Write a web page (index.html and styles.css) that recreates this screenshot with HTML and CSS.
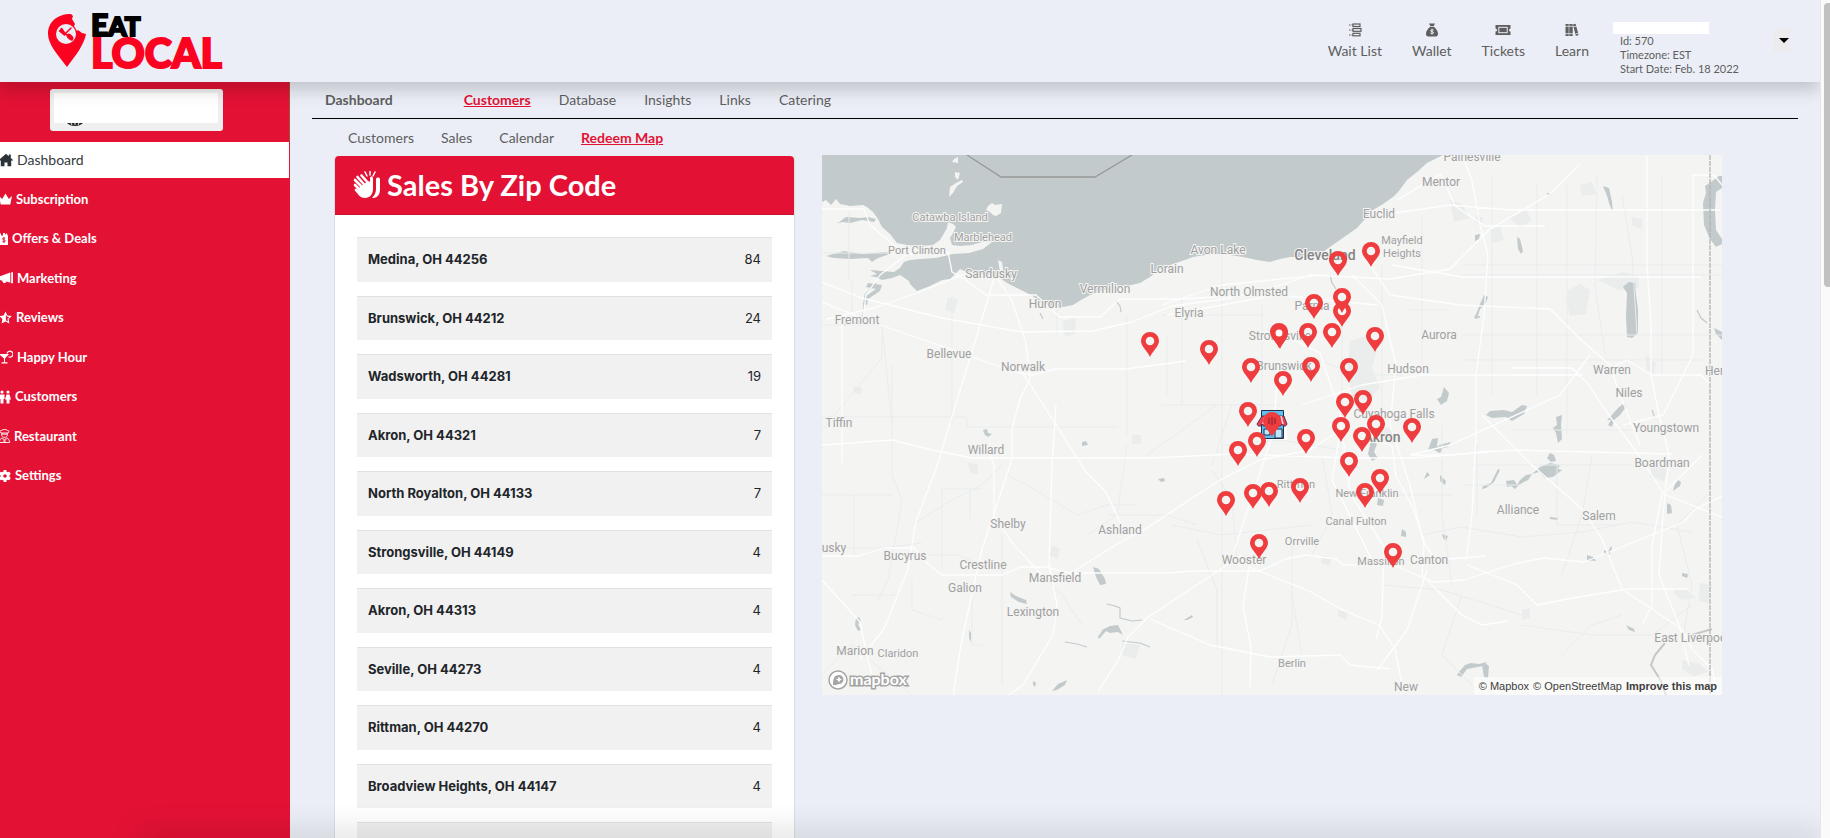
FILE: index.html
```html
<!DOCTYPE html>
<html lang="en">
<head>
    <meta charset="UTF-8">
    <meta name="viewport" content="width=device-width, initial-scale=1.0">
    <title>Eat Local - Redeem Map</title>
    <link rel="stylesheet" href="styles.css">
</head>
<body>
    <div class="app">
        <header class="topbar">
            <a href="#" class="logo" aria-label="Eat Local">
                <svg width="180" height="60" viewBox="0 0 180 60">
                    <path fill="#fb0221" d="M23 1C9 1 0 9 0 21c0 10 9 20 19 33 9-12 17-22 19-33l-4-1-4-3-1 1-3-5 1-2-3-5 1-3z"/>
                    <circle cx="18" cy="21" r="10" fill="#ebeef6"/>
                    <path stroke="#fb0221" stroke-width="1.500" stroke-linecap="round" d="M13 16l11 11M23 15l-6 6"/>
                    <ellipse cx="22" cy="24" rx="2.500" ry="4" fill="#fb0221" transform="rotate(-45 22 24)"/>
                    <path fill="#fb0221" d="M10.500 18l3.500-3.500 4 7-1.500 1.500z"/>
                    <text x="43" y="23" class="logo-eat"><tspan class="logo-e">E</tspan>AT</text>
                    <text x="43" y="55" class="logo-local">LOCAL</text>
                </svg>
            </a>
            <nav class="quick-links">
                <a href="#">
                    <svg width="14" height="14" viewBox="0 0 14 14" fill="none" stroke="#5e5e5e" stroke-width="1.200"><path d="M1 2h1.500M1 7h1.500M1 12h1.500M3.500 2H5M3.500 7H5M3.500 12H5"/><rect x="5" y="1" width="7" height="2.500"/><rect x="5" y="5.500" width="8" height="2.800"/><rect x="5" y="10.300" width="7" height="2.500"/></svg>
                    Wait List
                </a>
                <a href="#">
                    <svg width="14" height="14" viewBox="0 0 14 14" fill="#5e5e5e"><path d="M4 .5h6L8.700 3H5.300zM5.200 3.800h3.600c2.300 1.700 4.200 4.300 4.200 7 0 1.700-.8 2.700-2.300 2.700H3.300C1.800 13.500 1 12.500 1 10.800c0-2.700 1.900-5.300 4.200-7z"/><path d="M8.600 7.200c-.6-.6-3-.7-3 .5 0 1.300 3 .7 3 2 0 1.200-2.500 1.100-3.200.4M7 5.800v5.700" fill="none" stroke="#ebeef6"/></svg>
                    Wallet
                </a>
                <a href="#">
                    <svg width="16" height="14" viewBox="0 0 16 14"><path fill="#5e5e5e" d="M.5 2h15v3.500a1.500 1.500 0 0 0 0 3V12H.5V8.500a1.500 1.500 0 0 0 0-3z"/><rect x="3.800" y="4.300" width="8.400" height="5.400" fill="none" stroke="#ebeef6"/></svg>
                    Tickets
                </a>
                <a href="#">
                    <svg width="14" height="14" viewBox="0 0 14 14" fill="#5e5e5e"><path d="M.5 1h3.200v12H.5zM4.300 1h3.400v12H4.300zM8 1.600l2.600-.8 3 11.200-2.700.9-2.600-9.600z"/><path stroke="#ebeef6" stroke-width=".8" d="M0 3.300h8M0 10.700h8M8 4l4-1M10.500 11l4-1"/></svg>
                    Learn
                </a>
            </nav>
            <div class="account">
                <span class="account-name"></span>
                <span>Id: 570</span>
                <span>Timezone: EST</span>
                <span>Start Date: Feb. 18 2022</span>
            </div>
            <button class="account-toggle" aria-label="Account menu"></button>
        </header>

        <div class="layout">
            <aside class="sidebar">
                <div class="business">
                    <button class="business-button" aria-label="Business">
                        <span class="business-name"></span>
                        <svg width="16" height="3" viewBox="0 0 16 3"><path d="M0 0h16c-2 2-4.500 3-8 3S2 2 0 0z" fill="#222"/><path d="M4 0l1 2M8 0v2M12 0l-1 2" stroke="#efefef"/></svg>
                    </button>
                </div>
                <nav class="side-nav">
                    <a href="#" class="active">
                        <svg width="14" height="14" viewBox="0 0 14 14"><path d="M7 .8l2.800 2.500V1.500h2v3.600L14 7l-.9 1-.9-.7v6H8.500V9.500h-3v3.800H1.800v-6L.9 8 0 7z"/></svg>
                        Dashboard
                    </a>
                    <a href="#">
                        <svg width="13" height="14" viewBox="0 0 13 14"><path d="M0 4l3.200 3L6.500 1.500 9.800 7 13 4l-1.700 8.500H1.700z"/></svg>
                        Subscription
                    </a>
                    <a href="#">
                        <svg width="9" height="14" viewBox="0 0 9 14"><path d="M0 1.500h2v2h2V1h2v2l1.500-2L9 4v9H0z"/><path d="M6.200 6.500c-.6-.7-2.700-.6-2.700.4 0 1.300 2.900.7 2.900 2 0 1.100-2.300 1.200-3 .4M4.900 5v6" fill="none" stroke="#e31235" stroke-width=".9"/></svg>
                        Offers &amp; Deals
                    </a>
                    <a href="#">
                        <svg width="14" height="14" viewBox="0 0 14 14"><path d="M0 5.500L11.300 1.500v10.300l-4-1.200c0 2-3.800 2.200-4-.8L0 8.800zM12.200 1.200H14v11h-1.800z"/></svg>
                        Marketing
                    </a>
                    <a href="#">
                        <svg width="13" height="14" viewBox="0 0 13 14"><path fill-rule="evenodd" d="M6.500.5l1.900 4 4.400.5-3.200 3.100.8 4.500-3.900-2.200-3.900 2.200.8-4.500L.2 5l4.400-.5zM6.900 3.500v5.800l2 1.100-.4-2.600 1.800-1.900-2.500-.3z"/></svg>
                        Reviews
                    </a>
                    <a href="#">
                        <svg width="14" height="14" viewBox="0 0 14 14"><path d="M0 4h10L6 8.500v3.700h2.500v1.300h-6v-1.300H5V8.500z"/><path d="M8 3.500a3 3 0 1 1 1.500 3.300" fill="none" stroke="#fff" stroke-width="1.200"/></svg>
                        Happy Hour
                    </a>
                    <a href="#">
                        <svg width="12" height="14" viewBox="0 0 12 14"><circle cx="3" cy="2" r="1.600"/><circle cx="9" cy="2" r="1.600"/><path d="M.5 4.500h5v4.500h-1v4.500h-3V9h-1zM7.500 4.500h3l1.500 5h-1.500v4h-3v-4H6z"/></svg>
                        Customers
                    </a>
                    <a href="#">
                        <svg width="11" height="14" viewBox="0 0 11 14" fill="none" stroke="#fff" stroke-width=".9"><path d="M2 4c-1.500-1-1-3 .7-2.600C3.500.2 7.500.2 8.300 1.400 10 1 10.500 3 9 4zM2.700 4v2.500c.6 2.500 5 2.500 5.600 0V4M3 5.200h5M.5 13.500c0-3 1-4 3-4.500l2 2 2-2c2 .5 3 1.500 3 4.500zM4 10.500l3 3M7 10.500l-3 3"/></svg>
                        Restaurant
                    </a>
                    <a href="#">
                        <svg width="12" height="14" viewBox="0 0 12 14"><path fill-rule="evenodd" d="M4.700 1h2.600l.4 1.700 1 .6 1.700-.5L11.700 5l-1.200 1.300v1.400L11.700 9l-1.300 2.200-1.700-.5-1 .6-.4 1.700H4.700l-.4-1.700-1-.6-1.700.5L.3 9l1.200-1.300V6.300L.3 5l1.300-2.200 1.700.5 1-.6zM6 5.200a1.800 1.800 0 1 0 0 3.600 1.800 1.800 0 0 0 0-3.600z"/></svg>
                        Settings
                    </a>
                </nav>
            </aside>

            <main class="content">
                <nav class="tabs">
                    <span class="tabs-title">Dashboard</span>
                    <a href="#" class="active">Customers</a>
                    <a href="#">Database</a>
                    <a href="#">Insights</a>
                    <a href="#">Links</a>
                    <a href="#">Catering</a>
                </nav>
                <nav class="subtabs">
                    <a href="#">Customers</a>
                    <a href="#">Sales</a>
                    <a href="#">Calendar</a>
                    <a href="#" class="active">Redeem Map</a>
                </nav>

                <div class="columns">
                    <section class="card">
                        <h1 class="card-header">
                            <svg width="28" height="28" viewBox="0 0 28 28" fill="#fff"><path d="M2 9l8 8M2 14l6 6M4.500 6l8 9M8.500 4.500l8 9M3 19l4 4" stroke="#fff" stroke-width="2.600" stroke-linecap="round"/><path d="M6 17l9-7c2 2 2.500 0 2-3 0-2 3-2 3 0v11c0 5-3 9-8 9-4 0-7-3-8-6z"/><path d="M23 8c0-2 4-2 4 0v10c0 5-2 8-6 9h-2c3-3 4-6 4-9z"/><path d="M12 1l2 4M17 0v4M22 1l-2 4" stroke="#fff" stroke-width="1.500" stroke-linecap="round"/></svg>
                            Sales By Zip Code
                        </h1>
                        <table class="zip-table">
                            <tbody>
                                <tr><th scope="row">Medina, OH 44256</th><td>84</td></tr>
                                <tr><th scope="row">Brunswick, OH 44212</th><td>24</td></tr>
                                <tr><th scope="row">Wadsworth, OH 44281</th><td>19</td></tr>
                                <tr><th scope="row">Akron, OH 44321</th><td>7</td></tr>
                                <tr><th scope="row">North Royalton, OH 44133</th><td>7</td></tr>
                                <tr><th scope="row">Strongsville, OH 44149</th><td>4</td></tr>
                                <tr><th scope="row">Akron, OH 44313</th><td>4</td></tr>
                                <tr><th scope="row">Seville, OH 44273</th><td>4</td></tr>
                                <tr><th scope="row">Rittman, OH 44270</th><td>4</td></tr>
                                <tr><th scope="row">Broadview Heights, OH 44147</th><td>4</td></tr>
                                <tr><th scope="row">&nbsp;</th><td></td></tr>
                            </tbody>
                        </table>
                    </section>

                    <section class="map">
                        <svg class="map-canvas" viewBox="0 0 900 540" role="img" aria-label="Redeem map">
                            <defs>
                                <path id="pin" fill="#ef3c3e" fill-rule="evenodd" d="M0 16C-3 9-9 6-9-.5a9 8.500 0 0 1 18 0C9 6 3 9 0 16zM0-4.300a4.300 4.300 0 1 0 0 8.600 4.300 4.300 0 0 0 0-8.600z"/>
                            </defs>
                            <rect width="900" height="540" fill="#f4f4f3"/>

                            <!-- parks and towns -->
                            <g fill="#ebecec">
                                <path d="M528 186l20-6 8 12-6 20 8 20-12 14-16-4-4-30zM746 135l12-6 10 6-4 24-16 2-3-12zM775 125l26-8 16 4v12l-20 2zM758 30l12-3 4 12-14 2zM688 63l16-8 6 10-12 8zM668 75l10-4 4 14-12 3zM810 62l10 2v10l-10-4zM628 45l12 4 8 14-16 4zM852 432l12 3 10 8-14 2-8-6zM878 428l12 2-4 18-10-2zM300 488l18 2-4 14-14-4zM126 142l10 2-4 14-9-3zM230 390l8 4-2 10-8-4zM146 308l10 1v10l-8-1zM310 280h9v9h-9zM32 231l8 2-1 6-8-2zM240 166l14-3-1 16-10 3zM556 270l14 4 4 14-14-2z"/>
                                <path d="M860 505l18 4 8 8-14 4-12-6zM824 200l10 8-2 12-8-6zM700 455l8-2v10l-8 2zM516 455l10 2-2 8-8-4zM830 310l16 4-4 12-14-4zM655 60l6 3-2 7-6-3zM500 400l10 3-3 8-8-3z"/>
                            </g>

                            <!-- lake erie -->
                            <path fill="#c2cacb" d="M0 0H621L605 8 595 17 585 25 577 36 571 42 561 49 551 55 543 64 535 73 525 80 515 87 505 94 495 102H468L458 104 448 107 435 105 421 102 408 100 395 99 383 100 371 102 360 106 348 110 338 114 328 122 318 128 305 131 291 133 279 136 268 140 259 145 251 150 241 152 230 151 220 148 212 142 205 138 195 133 185 128 178 123 171 120 160 119 145 117 138 114 128 124 120 125 108 131 95 136 88 129 87 126 78 120 70 123 60 125 54 122 48 121 55 119 48 115 60 116 72 117 78 113 82 107 88 105 98 104 114 103 131 99 147 98 161 94 170 87 160 87 150 90 138 91 130 90 128 83 131 78 134 72 131 69 126 67 125 73 121 80 118 85 111 90 100 91 85 90 75 88 68 79 60 72 56 64 51 57 45 52 41 50 28 51 18 49 14 44 9 50 4 45 0 47z"/>
                            <g fill="#f4f4f3">
                                <path d="M166 51l4-3 3 2 7-1-1 9-5 3-3-1-3-3-4-2zM127 42l1-10 6-4 6-3 1 2-6 4-4 7zM132 4l4-2v6l-6-1zM133 17l5 1-2 7-3-3zM176 105l4 2 2 14-4-4z"/>
                            </g>
                            <g fill="#c2cacb">
                                <path d="M16 68l8-6 14 1 8-1 8 2-2 3-12-2-12 3-8-1-6 2zM4 101l18-5 18 3 24-2 4 2-12 4-6 4-4-4-18 1-16-1zM46 128l14 2-2 6-12 8-1 6-4-1 3-8 10-7-10-2z"/>
                                <path d="M883 31l6-4 8-6h3v12l-6 4-1 18 1 20 6 9v5l-6 3-6-8-6-14-1-22 3-10zM803 130l4-3 6 1 1 12 2 14v24l-6 5-5-1-1-20 1-24-4-6zM781 31l6 2 3 14 1 10-3-6-3-10zM695 82l3 2 3 12-2 3-3-5zM655 157l3-8 4-9 4 2-3 8-5 4-3 10-3-1zM668 256l14-1 8 2 10-7 5 1-3 8-12 7-6-4-14 1-6-3zM788 262l8-9 6-5 2 4-6 8-6 5-2 7-4-2 3-5h-4zM734 262l6-2-1 10 1 14-4 4-2-10-3-5 4-3zM728 298l4 2 2 6-5 1-4-4zM718 312l10-4 10 2-2 4 4 1-9 7-8 1-6-6-7 2-4 6-6 3-6 4 4-7 6-5 6-1zM676 314l2 1-6 12-8 6-4 1 1-3 8-3zM684 326l8-1 4 6-3 3-4-3-4 1zM856 325l3 2-1 4-7 5 2-7zM845 348l4 2 1 8-5 1z"/>
                                <path d="M610 284l6-1-1 8 6 2-3 5-8-4-4 1zM617 290l12-3-3 5-8 2zM549 285l6 4-3 8 4 6-6 3-4-7zM618 320l6 6-1 4-5-4zM556 343l6 2-1 6-6-1zM580 374l4 3v5l-5-1zM620 379l6 2-2 5-3-3zM622 232l5 6-2 8-6 4-4-6 4-2zM602 324l3-7 3 3zM271 412l6 2 6 10 1 5-6 1-4-8zM188 437l6 4 10 4 1 4-8-2-8-5zM280 475l8-4 8-1 5 10-5-3-8 1-4-2-7 8-1-2 4-6zM161 275l4-1 1 4 4 1-4 3-3-2zM260 287l4-1 2 4-6 1zM149 478l-2-3v8l2 4zM230 536l6-7 9-4-2 5-8 5zM211 526l3 2-1 4-2-2zM336 324l6-1 1 3-4 1zM34 463l3-1 2 4-3 3 3 6-3 1-3-6zM660 510l3-2 4 3-1 12-4-1zM637 517l6-7 6-2 8 1 8-2-4 4-16 3-6 8-4-2zM765 400l6 2 3 4-9-1zM782 395l4 2 3-6 1 2-3 7-5-2zM804 470l8 4 1 3-6-2zM728 362l8 1v2l-8-1zM860 418l6 1-1 4-5-2zM892 173l8 4v8l-6-6zM653 80l5-1-1 5-4 2zM652 162l6-1v2zM725 38l4 1v1h-4zM362 465l8-5 1 2-6 3z"/>
                                <path fill="none" stroke="#c2cacb" stroke-width="1.200" d="M54 128l-6 6-5 6-1 8-1 12-5 8-8-1-6 3M294 146l4 5 1 6M218 158l3 6M243 487l12 2 10 3M285 449l8 2 5 2v10l12 3 10-1M300 486l18 2 10 4M508 120l2 8 4 6M875 155l4 8 6 5M830 255l3 8"/>
                            </g>

                            <!-- minor roads -->
                            <g fill="none" stroke="#e9eded" stroke-width="1">
                                <path d="M0 98h70M27 55v70l3 2v30M0 170h60l10 100M60 178v25L0 275M70 210v110l10 25-14 80-10 20M0 262h145v10h150M130 140v130M235 145v35M305 160v120M0 340h70M32 340v60M0 393h60l40-5M30 440h45M120 334v80M148 334v30M120 334h40M90 425v30l30 10M150 430v60h10M180 380v150M185 320l20 10 50 30 30-10h30M90 370l40-25 30-15 20-20M285 360h60l30 10M105 400h30l40 15"/>
                                <path d="M340 160h100M360 140v110M400 100v440M440 150v120M340 250h120M390 315l20 30 5 60M500 300l10 60-20 40M470 390v80l-20 60M520 170v90M560 110v160M600 60v150M640 110h260M670 20v220M715 30v210M745 30v250M775 20l-2 110 10 70M800 40l10 60 5 80M840 20v200M640 180h260M640 120h260M640 205h240M690 275h150M650 310h160M735 310v60h60M640 330h60M400 290l60-5 60 10M350 370l50 10 90-10M600 380l40-8 60 10 60-5 50-10 60 10M560 430l60 5 80 25M470 440l10 60M375 385l20 50 0 60M700 470l70 10h60l40-30M740 500l30-30 30-10M640 440l-20 60 30 30M885 340l-30 30 15 60-10 60M585 155h40M620 270v90l10 70M655 290v70M770 300l-10 60-20 60M570 340h60M0 520l30-30 60 50M210 410l30 30 20 30M265 380l30-20 10-70M325 300l70-50M480 200l60 20h40M345 180v60M410 250l-20 60"/>
                            </g>

                            <!-- main roads -->
                            <g fill="none" stroke="#fdfefe" stroke-width="1.300" stroke-linejoin="round">
                                <path d="M0 54h42l6 16 24 20 14 9 40-2 4 20 14 8 20 15h50l24 22h40l20-18h60l70-4 60-20 80 4 60-10 40-40 60-35 30-30M0 127l40 16 80 20 80 14 70-1 40-9 40-16 60-8M0 147l50 20 90 31 50 18 20 4 24-6h70l60-8M172 124l-28 92-30 98-20 52-8 48-24 60-24 30M176 124l14 22 14 42 4 36-10 20-8 30v30l-10 30-20 60-20 90-8 50v36M84 100l-26 20-14 20-4 30M20 168v140M0 425l38 42 6 30 8 30M145 118l-50 20-40 14-50 12"/>
                                <path d="M0 401h36l26-8h30l14 16 14 11h60l18-8h26l24 6h100l20-2h70l26-12 20-4 30 4 8 6h50l18 8 22 9 30-2 50-16 30-6 40 4 40-16 60-24 10-12 30-15M200 217l26 40 38 60 20 20 14 30 4 8M234 250l-4 60-3 100 8 40-4 30-30 50-20 14M238 425l54-34 36-20 30-20 40-26 40-20 50-10 30-20M220 420l-30-32-18-28 0-50-9-22M0 290l70-5 40 10 40 8h180l80-4 120 4h60l100-8 160 4"/>
                                <path d="M420 400l-60 40-34 22M326 462l-20 20-10 24-20 30M328 464l60 26 60 12 70-2 10 10 40 4M427 412l60 24 36 20 34 14 16 24 8 40M427 412l-6 40 8 40-1 40M456 206l-4 70-20 60-20 60M458 178l40 20 20 60 10 80 34 54-2 70-6 22M530 120l30 30 14 60-6 60 20 60 14 60-2 30 40 40 20 10 26-4M605 415l-20 60-30 40M548 110l20 30 70 10 90 4 30 30 30 26 10 30 20 50M558 60l70-10 60 5h210M575 45l44-26 14 32 30 20h60M640 0l10 26 8 44 8 30-4 60-8 60 0 60-4 80-6 46M570 110l70 12h240M825 0v110l4 60v50l8 40 10 40-6 60-4 60 20 50 10 40M785 215l20-10 24 15h50l10 10M768 200l-30 40-110 50-40 10M660 260l50 50 50 44 20 30 20 50 60 40 10 20 20 20 10 40M690 213h60l16 16 20 30 30 40 26 40 60 24M645 410l50 20 20 20 30-6 60-10 60 0M880 300l-40 40-10 50v60l-10 20M870 20h22l8 10M871 20v180l-30 60-40 10"/>
                                <path d="M540 281l30 10 4 30 16 30 14 40 10 14 50-4M480 250l60-20 60-10h160M555 150l-100-10-110 20M340 150l60-20 100-10M520 265l-10 60 40 80M590 300h40l40-4"/>
                            </g>
                            <path d="M833 500l-4 10 10 16 14 40M833 500l10-12M870 480l20-6" fill="none" stroke="#c6c8c8" stroke-width="2"/>

                            <!-- borders -->
                            <path d="M145 0l34 22h94l37-22" fill="none" stroke="#999" stroke-width="1.300"/>
                            <path d="M888 0v540" stroke="#b5b5b5" stroke-width="1.300" stroke-dasharray="5 1"/>

                            <g class="place">
                                <text x="169" y="123">Sandusky</text>
                                <text x="283" y="138">Vermilion</text>
                                <text x="223" y="153">Huron</text>
                                <text x="35" y="169">Fremont</text>
                                <text x="127" y="203">Bellevue</text>
                                <text x="201" y="216">Norwalk</text>
                                <text x="17" y="272">Tiffin</text>
                                <text x="650" y="6">Painesville</text>
                                <text x="619" y="31">Mentor</text>
                                <text x="557" y="63">Euclid</text>
                                <text x="396" y="99">Avon Lake</text>
                                <text x="345" y="118">Lorain</text>
                                <text x="427" y="141">North Olmsted</text>
                                <text x="490" y="155">Parma</text>
                                <text x="367" y="162">Elyria</text>
                                <text x="458" y="185">Strongsville</text>
                                <text x="617" y="184">Aurora</text>
                                <text x="462" y="215">Brunswick</text>
                                <text x="586" y="218">Hudson</text>
                                <text x="572" y="263">Cuyahoga Falls</text>
                                <text x="790" y="219">Warren</text>
                                <text x="807" y="242">Niles</text>
                                <text x="911" y="220">Hermitage</text>
                                <text x="844" y="277">Youngstown</text>
                                <text x="840" y="312">Boardman</text>
                                <text x="696" y="359">Alliance</text>
                                <text x="777" y="365">Salem</text>
                                <text x="870" y="487">East Liverpool</text>
                                <text x="164" y="299">Willard</text>
                                <text x="186" y="373">Shelby</text>
                                <text x="298" y="379">Ashland</text>
                                <text x="12" y="397">usky</text>
                                <text x="83" y="405">Bucyrus</text>
                                <text x="161" y="414">Crestline</text>
                                <text x="233" y="427">Mansfield</text>
                                <text x="143" y="437">Galion</text>
                                <text x="211" y="461">Lexington</text>
                                <text x="33" y="500">Marion</text>
                                <text x="422" y="409">Wooster</text>
                                <text x="607" y="409">Canton</text>
                                <text x="584" y="536">New</text>
                            </g>
                            <g class="place place-small">
                                <text x="128" y="66">Catawba Island</text>
                                <text x="161" y="86">Marblehead</text>
                                <text x="95" y="99">Port Clinton</text>
                                <text x="580" y="89">Mayfield</text>
                                <text x="580" y="102">Heights</text>
                                <text x="474" y="333">Rittman</text>
                                <text x="545" y="342">New Franklin</text>
                                <text x="534" y="370">Canal Fulton</text>
                                <text x="480" y="390">Orrville</text>
                                <text x="559" y="410">Massillon</text>
                                <text x="76" y="502">Claridon</text>
                                <text x="470" y="512">Berlin</text>
                            </g>
                            <g class="place place-city">
                                <text x="503" y="105">Cleveland</text>
                                <text x="560" y="287">Akron</text>
                            </g>

                            <!-- restaurant -->
                            <g>
                                <path fill="#fff" d="M437 266h28v19h-28z"/>
                                <path fill="#5cc3ee" stroke="#1f2d50" d="M439.500 255.500h22v28h-22z"/>
                                <path fill="#ef3c4e" stroke="#1f2d50" stroke-width=".8" d="M440 261h22l3 8c-1 3-4 3-5 0-1 3-4 3-5 0-1 3-4 3-5 0-1 3-4 3-5 0-1 3-4 3-5 0-1 3-4 3-5 0z"/>
                                <path stroke="#f6d8dc" stroke-width="1.500" d="M443 261l-2 8M459 261l2 8"/>
                                <path fill="#bfe6f7" stroke="#1f2d50" d="M442 274h6v6h-6zM453 274h7v9h-7z"/>
                            </g>

                            <g>
                                <use href="#pin" x="516" y="105"/><use href="#pin" x="549" y="96"/>
                                <use href="#pin" x="520" y="156"/><use href="#pin" x="520" y="142"/>
                                <use href="#pin" x="492" y="148"/><use href="#pin" x="457" y="177"/>
                                <use href="#pin" x="486" y="177"/><use href="#pin" x="510" y="177"/>
                                <use href="#pin" x="553" y="181"/><use href="#pin" x="328" y="186"/>
                                <use href="#pin" x="387" y="194"/><use href="#pin" x="429" y="212"/>
                                <use href="#pin" x="489" y="211"/><use href="#pin" x="527" y="212"/>
                                <use href="#pin" x="461" y="225"/><use href="#pin" x="523" y="247"/>
                                <use href="#pin" x="541" y="244"/><use href="#pin" x="426" y="256"/>
                                <use href="#pin" x="450" y="266"/><use href="#pin" x="519" y="271"/>
                                <use href="#pin" x="590" y="272"/><use href="#pin" x="540" y="281"/>
                                <use href="#pin" x="554" y="269"/><use href="#pin" x="484" y="283"/>
                                <use href="#pin" x="435" y="286"/><use href="#pin" x="416" y="295"/>
                                <use href="#pin" x="527" y="306"/><use href="#pin" x="543" y="337"/>
                                <use href="#pin" x="558" y="323"/><use href="#pin" x="404" y="345"/>
                                <use href="#pin" x="431" y="338"/><use href="#pin" x="447" y="336"/>
                                <use href="#pin" x="478" y="332"/><use href="#pin" x="437" y="388"/>
                                <use href="#pin" x="571" y="397"/>
                                <path fill="#ef3c3e" d="M458 194c-3-7-8-10-8-16a8 8 0 0 1 16 0c0 6-5 9-8 16z"/>
                                <circle cx="457" cy="178" r="3.500" fill="#fff"/>
                                <circle cx="450" cy="266" r="5" fill="#ef3c3e"/>
                                <path stroke="#7a1f2c" d="M447 263v6M450 262v8M453 263v6"/>
                            </g>

                            <g class="mapbox-mark">
                                <circle cx="16" cy="525" r="9" fill="#fff" stroke="#a5a5a5" stroke-width="1.500"/>
                                <path fill="#a5a5a5" d="M11 530c0-6 1-10 6-10a4.500 4.500 0 0 1 0 9c-2 1-4 1-6 1z"/>
                                <path fill="#fff" d="M17 521.500l1 2 2 1-2 1-1 2-1-2-2-1 2-1z"/>
                                <text x="28" y="530">mapbox</text>
                            </g>
                        </svg>
                        <div class="attribution">
                            <a href="#">© Mapbox</a>
                            <a href="#">© OpenStreetMap</a>
                            <a href="#" class="improve">Improve this map</a>
                        </div>
                    </section>
                </div>
            </main>
        </div>
        <div class="page-fade"></div>
    </div>
    <div class="scrollbar"><div class="scrollbar-thumb"></div></div>
</body>
</html>
```
FILE: styles.css
```css
* {
    margin: 0;
    padding: 0;
    box-sizing: border-box;
}

body {
    font-family: Lato, "Open Sans", sans-serif;
    font-size: 14px;
    line-height: 20px;
    color: #5e5e5e;
    background: #ebeef6;
    display: flex;
    height: 100vh;
    overflow: hidden;
}

a {
    color: inherit;
    text-decoration: none;
}

button {
    border: none;
    font: inherit;
    cursor: pointer;
}

.app {
    flex: 1;
    display: flex;
    flex-direction: column;
    position: relative;
    overflow: hidden;
}

/* Top bar */
.topbar {
    position: relative;
    z-index: 2;
    flex: none;
    display: flex;
    align-items: flex-start;
    height: 82px;
    padding: 0 30px 0 48px;
    background: #ebeef6;
    box-shadow: 0 8px 16px rgba(0, 0, 0, 0.18);
}

.logo {
    margin: 13px auto 0 0;
}

.logo svg,
.map-canvas {
    display: block;
}

.logo svg {
    overflow: visible;
}

.logo-eat {
    font-size: 26px;
    font-weight: 900;
    fill: #000;
    stroke: #000;
    stroke-width: 2px;
}

.logo-e {
    font-size: 30px;
}

.logo-local {
    font-size: 41px;
    font-weight: 900;
    fill: #fb0221;
    stroke: #fb0221;
    stroke-width: 2px;
}

.quick-links {
    display: flex;
    gap: 30px;
    padding-top: 23px;
}

.quick-links a {
    display: flex;
    flex-direction: column;
    align-items: center;
    gap: 4px;
}

.account {
    display: flex;
    flex-direction: column;
    margin-left: 24px;
    padding-top: 22px;
    font-size: 11px;
    line-height: 14px;
}

.account span {
    padding-left: 7px;
}

.account-name {
    width: 96px;
    height: 12px;
    background: #fff;
}

.account-toggle {
    display: flex;
    align-items: flex-start;
    justify-content: flex-end;
    width: 17px;
    height: 23px;
    margin: 29px 0 0 34px;
    padding: 9px 1px 0 0;
    background: #ececec;
}

.account-toggle::after {
    content: "";
    border: 5px solid transparent;
    border-top-color: #000;
    border-bottom: none;
}

.layout {
    flex: 1;
    display: flex;
    min-height: 0;
}

/* Sidebar */
.sidebar {
    flex: none;
    width: 290px;
    background: #e31235;
    overflow: hidden;
}

.business {
    height: 60px;
    padding: 7px 0 0 50px;
    border-right: 1px solid #a2502f;
}

.business-button {
    display: block;
    width: 173px;
    height: 42px;
    padding: 4px 5px 8px 4px;
    background: #efefef;
    border-radius: 3px;
    text-align: left;
}

.business-name {
    display: block;
    height: 30px;
    background: #fff;
}

.business-button svg {
    display: block;
    margin-left: 13px;
}

.side-nav {
    display: flex;
    flex-direction: column;
    gap: 4px;
    margin-right: 1px;
    font-size: 13px;
    line-height: 1.5em;
}

.side-nav a {
    display: flex;
    align-items: center;
    gap: 4px;
    padding: 8px 0;
    margin-left: -1px;
    color: #fff;
    fill: #fff;
    font-weight: 700;
}

.side-nav .active {
    background: #fff;
    color: #343a40;
    fill: #2b3338;
    font-size: 14px;
    font-weight: 400;
}

/* Content */
.content {
    flex: 1;
    min-width: 0;
    padding: 0 22px;
}

.tabs,
.subtabs {
    display: flex;
    gap: 28px;
}

.tabs {
    height: 37px;
    padding: 8px 0 0 13px;
    border-bottom: 1px solid #000;
}

.tabs-title {
    margin-right: 43px;
    font-weight: 700;
}

.subtabs {
    gap: 27px;
    height: 36px;
    padding: 9px 0 0 36px;
}

.tabs .active,
.subtabs .active {
    color: #e31235;
    font-weight: 700;
    text-decoration: underline;
}

.columns {
    display: grid;
    grid-template-columns: 461fr 900fr;
    gap: 27px;
    align-items: start;
    padding: 0 76px 0 22px;
}

.card {
    margin-top: 1px;
    background: #fff;
    border: 1px solid #dbdde2;
    border-top: none;
    border-radius: 4px;
}

.card-header {
    display: flex;
    align-items: center;
    gap: 6px;
    padding: 10px 18px;
    background: #e31235;
    border-bottom: 1px solid #c81335;
    border-radius: 4px 4px 0 0;
    color: #fff;
    font-size: 29px;
    line-height: 38px;
}

.zip-table {
    width: calc(100% - 44px);
    margin: 8px 22px 0;
    border-spacing: 0 14px;
    color: #212529;
    font-family: Inter, sans-serif;
    font-size: 13px;
    line-height: 1.5;
}

.zip-table th,
.zip-table td {
    padding: 12px 11px;
    background: #f1f1f1;
    border-top: 1px solid #dee2e6;
    text-align: left;
}

.zip-table td {
    text-align: right;
}

/* Map */
.map {
    position: relative;
    overflow: hidden;
}

.map-canvas {
    width: 100%;
    height: auto;
}

.place {
    font-family: Roboto, sans-serif;
    font-size: 12px;
    fill: #a0a0a0;
    stroke: #f4f4f3;
    stroke-width: 2px;
    paint-order: stroke;
    text-anchor: middle;
}

.place-small {
    font-size: 11px;
}

.place-city {
    font-size: 14px;
    font-weight: 500;
    fill: #858585;
}

.mapbox-mark text {
    font-size: 16px;
    font-weight: 700;
    fill: #fff;
    stroke: #a5a5a5;
    stroke-width: 3px;
    paint-order: stroke;
}

.attribution {
    position: absolute;
    right: 0;
    bottom: 0;
    display: flex;
    gap: 4px;
    padding: 0 5px;
    background: rgba(255, 255, 255, 0.5);
    color: #404040;
    font-family: "Liberation Sans", sans-serif;
    font-size: 11px;
    line-height: 18px;
}

.improve {
    font-weight: 700;
}

/* Shadow rising from the bottom edge of the window */
.page-fade {
    position: absolute;
    left: 140px;
    right: 0;
    bottom: -10px;
    height: 10px;
    z-index: 2;
    box-shadow: 0 0 32px rgba(0, 0, 0, 0.3);
}

.scrollbar {
    flex: none;
    width: 10px;
    padding: 3px 0 0 3px;
    background: #fafafa;
    border-left: 1px solid #e6e6e6;
}

.scrollbar-thumb {
    height: 34%;
    background: #c1c1c1;
    border-radius: 4px 0 0 4px;
}
```
